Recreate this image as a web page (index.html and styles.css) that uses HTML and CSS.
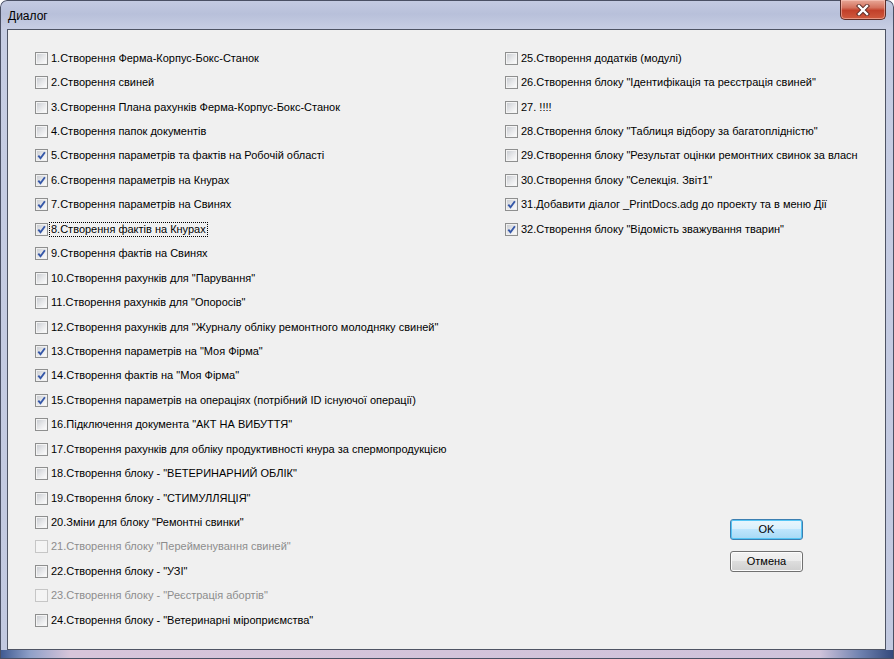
FILE: index.html
```html
<!DOCTYPE html>
<html lang="uk">
<head>
    <meta charset="UTF-8">
    <title>Диалог</title>
    <link rel="stylesheet" href="styles.css">
</head>
<body>
    <div class="window">
        <div class="titlebar">
            <span class="title">Диалог</span>
            <div class="close-button">
                <svg width="16" height="12" viewBox="0 0 16 12">
                    <path d="M4 2 L12 10 M12 2 L4 10" stroke="#5a2a25" stroke-width="4.2" stroke-linecap="square"/>
                    <path d="M4 2 L12 10 M12 2 L4 10" stroke="#ffffff" stroke-width="2.4" stroke-linecap="square"/>
                </svg>
            </div>
        </div>

        <div class="client">
            <div class="col col-left">
                <label class="item"><span class="box"></span><span class="text">1.Створення Ферма-Корпус-Бокс-Станок</span></label>
                <label class="item"><span class="box"></span><span class="text">2.Створення свиней</span></label>
                <label class="item"><span class="box"></span><span class="text">3.Створення Плана рахунків Ферма-Корпус-Бокс-Станок</span></label>
                <label class="item"><span class="box"></span><span class="text">4.Створення папок документів</span></label>
                <label class="item"><span class="box checked"></span><span class="text">5.Створення параметрів та фактів на Робочій області</span></label>
                <label class="item"><span class="box checked"></span><span class="text">6.Створення параметрів на Кнурах</span></label>
                <label class="item"><span class="box checked"></span><span class="text">7.Створення параметрів на Свинях</span></label>
                <label class="item"><span class="box checked"></span><span class="text focused">8.Створення фактів на Кнурах</span></label>
                <label class="item"><span class="box checked"></span><span class="text">9.Створення фактів на Свинях</span></label>
                <label class="item"><span class="box"></span><span class="text">10.Створення рахунків для "Парування"</span></label>
                <label class="item"><span class="box"></span><span class="text">11.Створення рахунків для "Опоросів"</span></label>
                <label class="item"><span class="box"></span><span class="text">12.Створення рахунків для "Журналу обліку ремонтного молодняку свиней"</span></label>
                <label class="item"><span class="box checked"></span><span class="text">13.Створення параметрів на "Моя Фірма"</span></label>
                <label class="item"><span class="box checked"></span><span class="text">14.Створення фактів на "Моя Фірма"</span></label>
                <label class="item"><span class="box checked"></span><span class="text">15.Створення параметрів на операціях (потрібний ID існуючої операції)</span></label>
                <label class="item"><span class="box"></span><span class="text">16.Підключення документа "АКТ НА ВИБУТТЯ"</span></label>
                <label class="item"><span class="box"></span><span class="text">17.Створення рахунків для обліку продуктивності кнура за спермопродукцією</span></label>
                <label class="item"><span class="box"></span><span class="text">18.Створення блоку - "ВЕТЕРИНАРНИЙ ОБЛІК"</span></label>
                <label class="item"><span class="box"></span><span class="text">19.Створення блоку - "СТИМУЛЛЯЦІЯ"</span></label>
                <label class="item"><span class="box"></span><span class="text">20.Зміни для блоку "Ремонтні свинки"</span></label>
                <label class="item disabled"><span class="box"></span><span class="text">21.Створення блоку "Перейменування свиней"</span></label>
                <label class="item"><span class="box"></span><span class="text">22.Створення блоку - "УЗІ"</span></label>
                <label class="item disabled"><span class="box"></span><span class="text">23.Створення блоку - "Реєстрація абортів"</span></label>
                <label class="item"><span class="box"></span><span class="text">24.Створення блоку - "Ветеринарні міроприємства"</span></label>
            </div>

            <div class="col col-right">
                <label class="item"><span class="box"></span><span class="text">25.Створення додатків (модулі)</span></label>
                <label class="item"><span class="box"></span><span class="text">26.Створення блоку "Ідентифікація та реєстрація свиней"</span></label>
                <label class="item"><span class="box"></span><span class="text">27. !!!!</span></label>
                <label class="item"><span class="box"></span><span class="text">28.Створення блоку "Таблиця відбору за багатоплідністю"</span></label>
                <label class="item"><span class="box"></span><span class="text">29.Створення блоку "Результат оцінки ремонтних свинок за власн</span></label>
                <label class="item"><span class="box"></span><span class="text">30.Створення блоку "Селекція. Звіт1"</span></label>
                <label class="item"><span class="box checked"></span><span class="text">31.Добавити діалог _PrintDocs.adg до проекту та в меню Дії</span></label>
                <label class="item"><span class="box checked"></span><span class="text">32.Створення блоку "Відомість зважування тварин"</span></label>

                <div class="buttons">
                    <button class="btn btn-default">OK</button>
                    <button class="btn">Отмена</button>
                </div>
            </div>
        </div>
    </div>
</body>
</html>
```

FILE: styles.css
```css
*, *::before, *::after {
    box-sizing: border-box;
}

body {
    margin: 0;
    background-color: #ffffff;
    font-family: "Liberation Sans", Arial, sans-serif;
}

/* Рамка окна */
.window {
    width: 894px;
    height: 659px;
    display: flex;
    flex-direction: column;
    padding: 0 8px 9px 7px;
    border-radius: 7px 7px 0 0;
    background:
        linear-gradient(to right, #3d5890 0, #8fa0c8 30px, #d7c5da 70px, #cfc3db 820px, #6f82b0 860px, #33487a 894px) bottom / 100% 9px no-repeat,
        linear-gradient(to bottom, #c4cbe2 0, #b8c0da 14px, #c6cde3 28px, #c2c9e0 100%);
    box-shadow: inset 0 0 0 1px #4a5064;
}

.titlebar {
    height: 29px;
    display: flex;
    align-items: flex-start;
}
.title {
    margin-left: 1px;
    padding-top: 9px;
    font-size: 12px;
    color: #000;
}
.close-button {
    margin-left: auto;
    width: 46px;
    height: 20px;
    display: flex;
    align-items: center;
    justify-content: center;
    border: 1px solid #5e2d27;
    border-top: none;
    border-radius: 0 0 5px 5px;
    background: linear-gradient(to bottom, #e8a898 0, #d4725e 40%, #c2402a 55%, #cf5a3e 100%);
    box-shadow: inset 0 0 0 1px rgba(255, 210, 200, 0.5);
}

/* Клиентская область */
.client {
    flex: 1;
    display: flex;
    padding: 16px 0 0 27px;
    border: 1px solid #4e5464;
    background-color: #f0f0f0;
    font-size: 11px;
    color: #000;
}
.col {
    display: flex;
    flex-direction: column;
}
.col-left {
    width: 470px;
}
.col-right {
    flex: 1;
}

.item {
    height: 24.45px;
    display: flex;
    align-items: center;
    gap: 2px;
    white-space: nowrap;
}
.text {
    padding: 0 1px;
    line-height: 13px;
}
.text.focused {
    outline: 1px dotted #000;
}

.box {
    width: 13px;
    height: 13px;
    flex: none;
    padding: 1px;
    border: 1px solid #8e8f8f;
    background: linear-gradient(135deg, #cbced3 0, #e8e9eb 55%, #fbfbfb 100%) content-box, #f4f4f4;
    background-repeat: no-repeat;
}
.box.checked {
    background-image:
        url("data:image/svg+xml;utf8,<svg xmlns='http://www.w3.org/2000/svg' width='9' height='9' viewBox='0 0 9 9'><path d='M1.3 4.6 L3.5 7.2 L7.9 1.2' fill='none' stroke='%233557a8' stroke-width='1.9'/></svg>"),
        linear-gradient(135deg, #cbced3 0, #e8e9eb 55%, #fbfbfb 100%);
    background-origin: content-box;
    background-clip: content-box;
}
.disabled .text {
    color: #8d8d8d;
}
.disabled .box {
    border-color: #c6c6c6;
    background: #f4f4f4;
}

/* Кнопки */
.buttons {
    margin-top: 277px;
    margin-left: 225px;
    display: flex;
    flex-direction: column;
    gap: 11px;
}
.btn {
    width: 73px;
    height: 21px;
    padding: 0;
    border: 1px solid #707070;
    border-radius: 3px;
    font-family: "Liberation Sans", Arial, sans-serif;
    font-size: 11px;
    color: #000;
    background: linear-gradient(to bottom, #f2f2f2 0, #ebebeb 50%, #dddddd 50%, #cfcfcf 100%);
    box-shadow: inset 0 0 0 1px #fcfcfc;
}
.btn-default {
    border-color: #3c7fb1;
    background: linear-gradient(to bottom, #e9f6fd 0, #d9f0fc 50%, #bee6fd 50%, #a7d9f5 100%);
    box-shadow: inset 0 0 0 1px #56c6f5;
}
```
